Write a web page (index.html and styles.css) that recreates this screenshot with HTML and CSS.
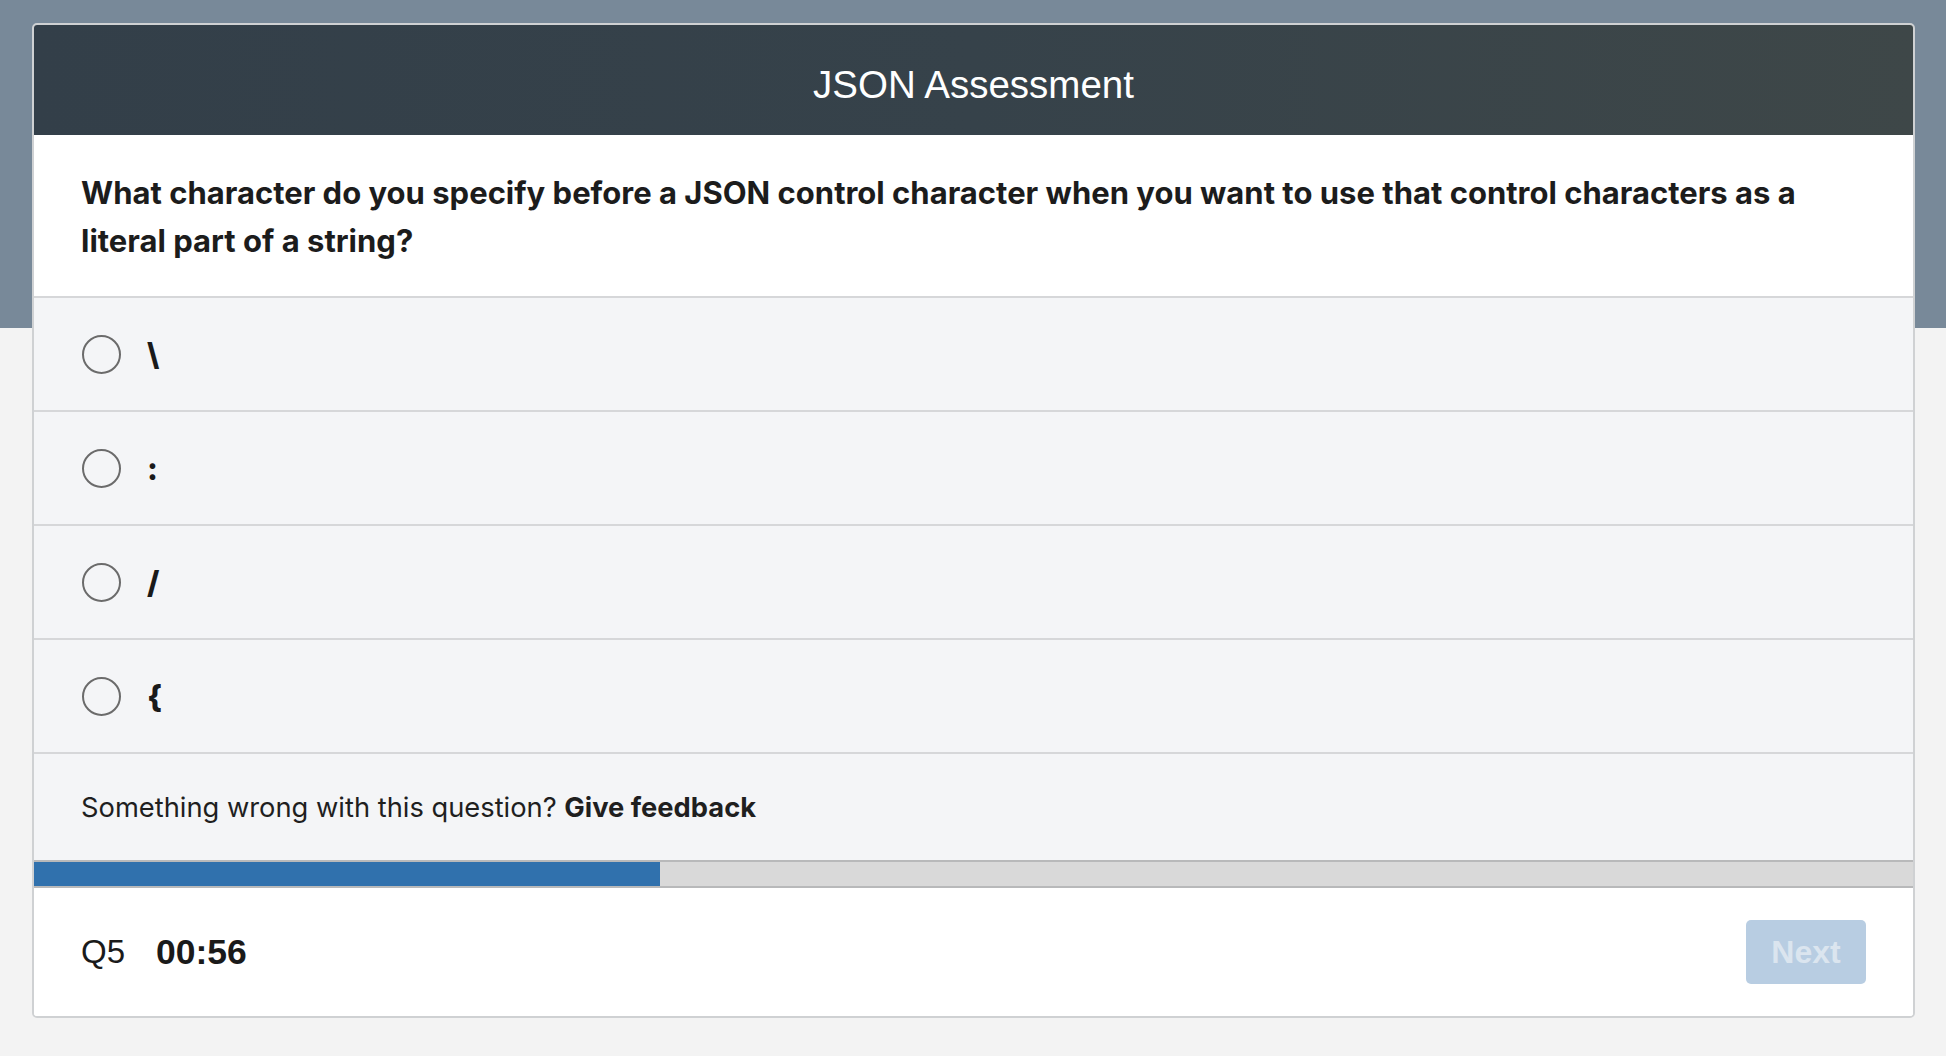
FILE: index.html
```html
<!DOCTYPE html>
<html lang="en">
<head>
<meta charset="utf-8">
<title>JSON Assessment</title>
<link rel="stylesheet" href="styles.css">
</head>
<body>
<div class="band"></div>
<main class="card">
  <header class="card-header">
    <h1 class="title">JSON Assessment</h1>
  </header>
  <section class="question">
    <p class="question-text">What character do you specify before a JSON control character when you want to use that control characters as a literal part of a string?</p>
  </section>
  <ul class="options">
    <li class="option"><span class="radio"></span><span class="option-text">\</span></li>
    <li class="option"><span class="radio"></span><span class="option-text">:</span></li>
    <li class="option"><span class="radio"></span><span class="option-text">/</span></li>
    <li class="option"><span class="radio"></span><span class="option-text">{</span></li>
  </ul>
  <div class="feedback">Something wrong with this question? <strong class="feedback-link">Give feedback</strong></div>
  <div class="progress"><div class="progress-fill" style="width: 33.3%"></div></div>
  <footer class="card-footer">
    <div class="status">
      <span class="qnum">Q5</span>
      <span class="timer">00:56</span>
    </div>
    <button class="next" disabled>Next</button>
  </footer>
</main>
</body>
</html>
```
FILE: styles.css
```css
html, body {
  margin: 0;
  padding: 0;
}
body {
  background: #f3f3f3;
  font-family: Inter, Roboto, "Liberation Sans", Arial, sans-serif;
  color: #1f1f1f;
  position: relative;
  min-height: 1056px;
}
.band {
  position: absolute;
  left: 0;
  top: 0;
  right: 0;
  height: 328px;
  background: #788999;
}
.card {
  position: relative;
  margin: 23px 31px 0 32px;
  border: 2px solid #cfd1d3;
  border-radius: 5px;
  overflow: hidden;
  background: #fff;
}
.card-header {
  height: 110px;
  box-sizing: border-box;
  padding-top: 10px;
  display: flex;
  align-items: center;
  justify-content: center;
  background: linear-gradient(90deg, #333f49 0%, #36424a 50%, #3e4748 100%);
}
.title {
  margin: 0;
  font-family: "Liberation Sans", Arial, sans-serif;
  font-weight: 400;
  font-size: 38.5px;
  color: #ffffff;
}
.question {
  padding: 34px 47px 31px 47px;
  border-bottom: 2px solid #d6d7d9;
}
.question-text {
  margin: 0;
  font-size: 31px;
  line-height: 48px;
  font-weight: 700;
  color: #1c1c1c;
}
.options {
  list-style: none;
  margin: 0;
  padding: 0;
  background: #f4f5f7;
}
.option {
  height: 112px;
  display: flex;
  align-items: center;
  padding-left: 48px;
  border-bottom: 2px solid #d6d7d9;
}
.radio {
  width: 35px;
  height: 35px;
  border: 2px solid #6b6b6b;
  border-radius: 50%;
  flex: none;
}
.option-text {
  margin-left: 26px;
  font-size: 31px;
  font-weight: 800;
  color: #1a1a1a;
}
.feedback {
  height: 106px;
  display: flex;
  align-items: center;
  padding-left: 47px;
  background: #f4f5f7;
  font-size: 27.3px;
  color: #1f1f1f;
  white-space: pre;
}
.feedback-link {
  font-weight: 700;
}
.progress {
  height: 24px;
  border-top: 2px solid #b8b9ba;
  border-bottom: 2px solid #b8b9ba;
  background: #d9d9d9;
  display: flex;
}
.progress-fill {
  background: #3071ad;
  height: 100%;
}
.card-footer {
  height: 128px;
  display: flex;
  align-items: center;
  justify-content: space-between;
  padding: 0 47px;
  background: #fff;
}
.status {
  display: flex;
  align-items: center;
  gap: 31px;
  font-family: "Liberation Sans", Arial, sans-serif;
  font-size: 33px;
  color: #1a1a1a;
}
.timer {
  font-weight: 700;
  font-size: 35.5px;
}
.next {
  width: 120px;
  height: 64px;
  border: none;
  border-radius: 5px;
  background: #b8cde2;
  color: #dbe5ef;
  font-family: "Liberation Sans", Arial, sans-serif;
  font-weight: 700;
  font-size: 32px;
  padding: 0;
}
```
